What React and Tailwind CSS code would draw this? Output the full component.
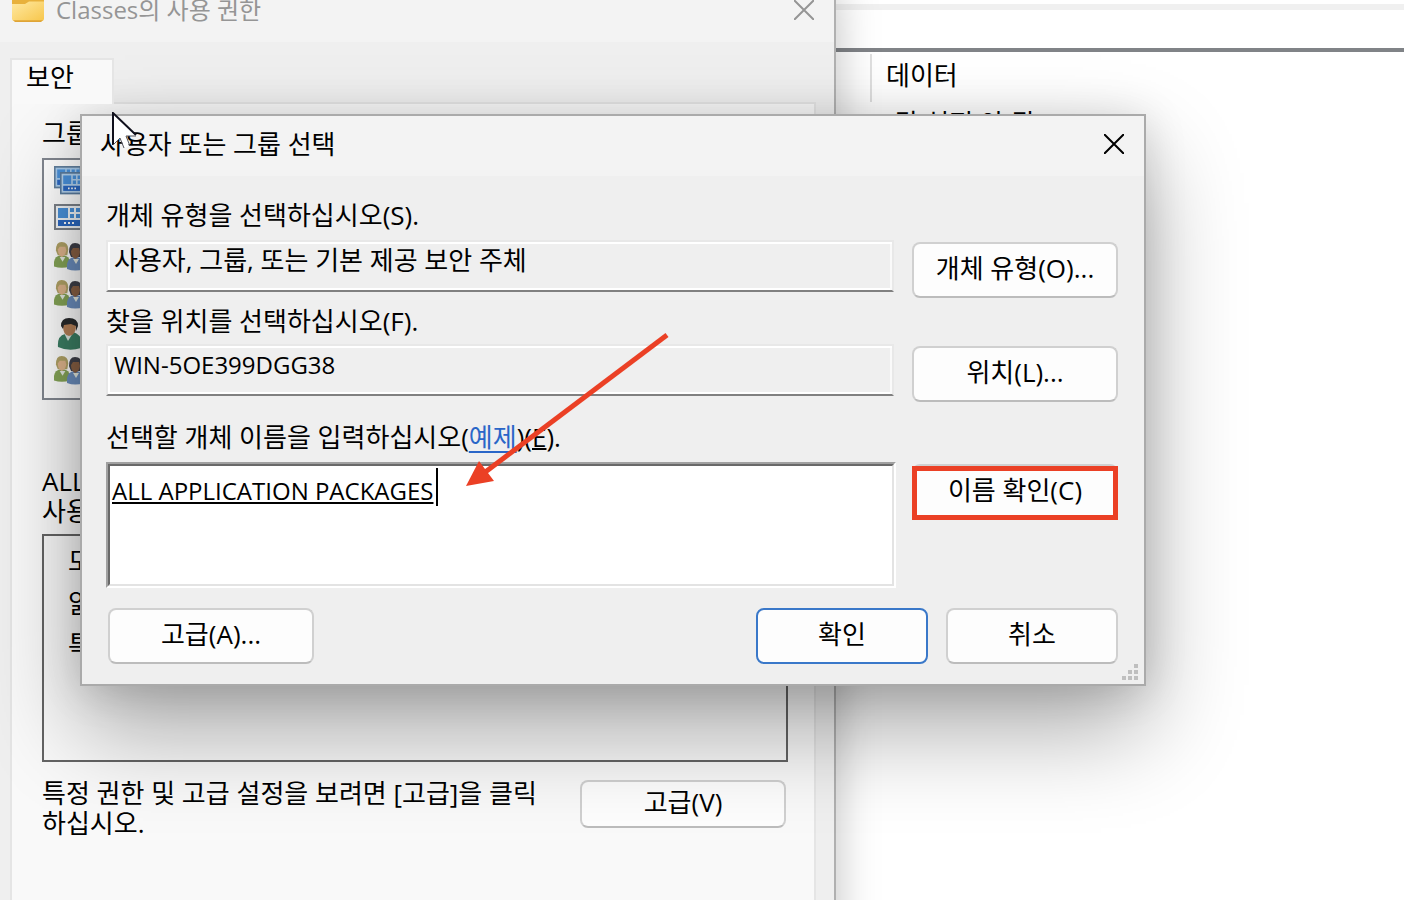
import { useState } from "react";

const principals = ["computers", "computer", "group", "group", "user", "group"];

const permissions = ["모", "읽", "특"];

function FolderIcon() {
  return (
    <svg width="32" height="24" viewBox="0 0 32 28" preserveAspectRatio="none" aria-hidden="true">
      <defs>
        <linearGradient id="folder" x1="0" y1="0" x2="1" y2="1">
          <stop offset="0" stopColor="#ffe9a2" />
          <stop offset="1" stopColor="#f7c64b" />
        </linearGradient>
      </defs>
      <path d="M0 3a3 3 0 0 1 3-3h26a3 3 0 0 1 3 3v21H0z" fill="#e8b13c" />
      <path d="M0 7h13l4-3h15v20a3 3 0 0 1-3 3H3a3 3 0 0 1-3-3z" fill="url(#folder)" />
      <path d="M1 26h30l-2 2H3z" fill="#dfa436" />
    </svg>
  );
}

function CloseIcon() {
  return (
    <svg width="20" height="20" viewBox="0 0 20 20" aria-hidden="true">
      <path d="M0 0L20 20M20 0L0 20" stroke="currentColor" strokeWidth="2" />
    </svg>
  );
}

function Screen({ frame, back }) {
  return (
    <>
      <rect width="34" height="26" fill={frame} />
      <rect x="2" y="2" width="30" height="22" fill={back} />
      <rect x="4" y="4" width="10" height="10" fill="#4a92dc" />
      <path d="M16 4h4v4h-4zM22 4h4v4h-4zM28 4h4v4h-4zM16 10h4v4h-4zM22 10h4v4h-4zM28 10h4v4h-4z" fill="#4a92dc" />
      <rect x="4" y="16" width="26" height="6" fill="#2c6ac4" />
      <path d="M10 18h2v2h-2zM14 18h2v2h-2zM18 18h2v2h-2z" fill="#fff" />
    </>
  );
}

function Person({ hair, skin, shirt }) {
  return (
    <>
      <path d="M0 26v-5q1-6 7-7h3q6 1 7 7v5q-9 3-17 0z" fill={shirt} />
      <path d="M2 9Q2 0 8 0q7 0 7 8l-1 6H4z" fill={hair} />
      <path d="M4 8l2-3h6l1 4q-1 6-5 7q-4-2-4-8z" fill={skin} />
      <path d="M6 16l3 5 3-5z" fill="#e6ebe2" />
    </>
  );
}

function PrincipalIcon({ kind }) {
  return (
    <svg width="40" height="32" viewBox="0 0 40 32" aria-hidden="true">
      {kind === "computers" && (
        <>
          <g transform="scale(0.8 0.86)">
            <Screen frame="#62819f" back="#a9cdee" />
          </g>
          <g transform="translate(6 6) scale(0.8 0.86)">
            <Screen frame="#5b7da0" back="#b5d3ee" />
          </g>
        </>
      )}
      {kind === "computer" && <Screen frame="#7d838b" back="#f4f7fa" />}
      {kind === "group" && (
        <>
          <g transform="scale(0.95 0.94)">
            <Person hair="#b3a467" skin="#e0b68d" shirt="#86a557" />
          </g>
          <g transform="translate(13 1)">
            <Person hair="#40414a" skin="#8b6245" shirt="#6c8fbf" />
          </g>
        </>
      )}
      {kind === "user" && (
        <g>
          <path d="M4 29q-1-11 7-13l4-2h4q8 2 8 10v6q-12 4-23-1z" fill="#3d8065" />
          <path d="M10 15l4 8 5-8z" fill="#dfe9e2" />
          <path d="M9 8q0 9 6 10q7-1 7-10l-2-3h-9z" fill="#b78259" />
          <path d="M7 8Q7 0 15 0q9 0 9 8l-2 5v-5l-5-2-7 1-1 4z" fill="#292b2d" />
        </g>
      )}
    </svg>
  );
}

function Button({ primary, className = "", children, ...props }) {
  return (
    <button
      type="button"
      className={`rounded-lg border-2 bg-[#fdfdfd] pb-1 text-center ${
        primary ? "border-[#3a78c9]" : "border-[#d0d0d0] border-b-[#bcbcbc]"
      } ${className}`}
      {...props}
    >
      {children}
    </button>
  );
}

function RegistryPane() {
  return (
    <div className="flex flex-col pl-[870px]">
      <div className="-ml-[870px] mt-1 h-1.5 bg-[#f0f0f0]" />
      <div className="-ml-[870px] mt-[38px] h-1 bg-[#808387]" />
      <table className="mt-0.5 w-full text-left">
        <thead>
          <tr>
            <th className="h-12 border-l-2 border-[#e0e0e0] pb-1.5 pl-3.5 font-normal">데이터</th>
          </tr>
        </thead>
        <tbody>
          <tr>
            <td className="pl-4 pt-1.5">(값 설정 안 됨)</td>
          </tr>
        </tbody>
      </table>
    </div>
  );
}

function PermissionsWindow() {
  return (
    <section className="absolute -left-0.5 -top-5 flex h-[960px] w-[838px] flex-col border-2 border-[#b0b0b0] bg-[#efefef] shadow-[0_8px_40px_rgba(0,0,0,0.25)]">
      <header className="flex h-[60px] shrink-0 items-center bg-[#f3f3f3] pb-1 pl-3 pr-5 text-[24px] text-[#959595]">
        <FolderIcon />
        <h1 className="ml-3 grow">Classes의 사용 권한</h1>
        <button type="button" aria-label="닫기">
          <CloseIcon />
        </button>
      </header>

      <div className="flex grow flex-col pl-2.5 pr-[18px] pt-4">
        <div className="relative z-10 -mb-0.5 h-[46px] w-[104px] border-2 border-b-0 border-[#e5e5e5] bg-[#f9f9f9] pl-3.5 pt-0.5">
          보안
        </div>
        <div className="grow border-2 border-[#e5e5e5] bg-[#f9f9f9] pl-[30px] pr-[26px] pt-3.5">
          <p>그룹</p>
          <ul className="mt-2.5 flex h-[242px] flex-col gap-1.5 border-2 border-[#828790] bg-white pl-2.5 pt-1.5">
            {principals.map((kind, i) => (
              <li key={i} className="h-8">
                <PrincipalIcon kind={kind} />
              </li>
            ))}
          </ul>

          <p className="mt-[66px]">
            ALL
            <br />
            사용
          </p>
          <ul className="mt-2 flex h-[228px] flex-col gap-3 border-2 border-[#646464] pl-6 pt-2.5">
            {permissions.map((name) => (
              <li key={name}>{name}</li>
            ))}
          </ul>

          <div className="mt-4 flex items-start justify-between pr-0.5">
            <p>
              특정 권한 및 고급 설정을 보려면 [고급]을 클릭
              <br />
              하십시오.
            </p>
            <Button className="mt-0.5 h-12 w-[206px]">고급(V)</Button>
          </div>
        </div>
      </div>
    </section>
  );
}

function SelectDialog() {
  const [names, setNames] = useState("ALL APPLICATION PACKAGES");

  return (
    <section
      role="dialog"
      aria-labelledby="select-title"
      className="absolute left-20 top-[114px] w-[1066px] border-2 border-[#aaaaaa] bg-[#efefef] shadow-[0_44px_90px_rgba(0,0,0,0.33),0_4px_40px_rgba(0,0,0,0.14)]"
    >
      <header className="flex h-[60px] items-center justify-between bg-[#f3f3f3] pb-1 pl-[18px] pr-5">
        <h2 id="select-title">사용자 또는 그룹 선택</h2>
        <button type="button" aria-label="닫기">
          <CloseIcon />
        </button>
      </header>

      <div className="pb-5 pl-6 pr-[26px] pt-6">
        <div className="grid grid-cols-[1fr_206px] gap-x-4">
          <label htmlFor="types" className="col-span-2 mb-2.5">개체 유형을 선택하십시오(S).</label>
          <input
            id="types"
            readOnly
            value="사용자, 그룹, 또는 기본 제공 보안 주체"
            className="mr-0.5 h-[52px] border-2 border-[#e8e8e8] border-b-[#808080] bg-[#efefef] pb-3.5 pl-1.5 shadow-[inset_0_2px_#fff,inset_2px_0_#fff,inset_-2px_0_#fafafa,inset_0_-2px_#fff] outline-none"
          />
          <Button className="mt-0.5 h-14">개체 유형(O)...</Button>

          <label htmlFor="place" className="col-span-2 mb-2 mt-2">찾을 위치를 선택하십시오(F).</label>
          <input
            id="place"
            readOnly
            value="WIN-5OE399DGG38"
            className="mr-0.5 h-[52px] border-2 border-[#e8e8e8] border-b-[#808080] bg-[#efefef] pb-3 pl-1.5 text-[24px] shadow-[inset_0_2px_#fff,inset_2px_0_#fff,inset_-2px_0_#fafafa,inset_0_-2px_#fff] outline-none"
          />
          <Button className="mt-0.5 h-14">위치(L)...</Button>

          <div className="col-span-2 mb-2.5 mt-5">
            <label htmlFor="names">선택할 개체 이름을 입력하십시오(</label>
            <a href="#example" className="text-[#2a66c8] underline decoration-2 underline-offset-4">예제</a>
            <label htmlFor="names">
              )(<span className="underline decoration-2">E</span>).
            </label>
          </div>
          <div className="relative h-[126px] border-2 border-b-white border-l-[#a0a0a0] border-r-white border-t-[#a0a0a0]">
            <textarea
              id="names"
              value={names}
              onChange={(e) => setNames(e.target.value)}
              spellCheck={false}
              className="block h-full w-full resize-none border-2 border-b-[#e3e3e3] border-l-[#696969] border-r-[#e3e3e3] border-t-[#696969] bg-white pl-0.5 pt-2.5 text-[24px] underline decoration-2 underline-offset-2 outline-none"
            />
            <span className="absolute left-[328px] top-1 h-[38px] w-0.5 bg-black" />
          </div>
          <Button className="relative mt-0.5 h-14">
            이름 확인(C)
            <span className="absolute -inset-x-0.5 -bottom-0.5 top-0 border-5 border-[#eb4025]" />
          </Button>
        </div>

        <footer className="mt-5 flex gap-[18px] pl-0.5">
          <Button className="mr-auto h-14 w-[206px]">고급(A)...</Button>
          <Button primary className="h-14 w-[172px]">확인</Button>
          <Button className="h-14 w-[172px]">취소</Button>
        </footer>
      </div>

      <svg className="absolute bottom-1 right-1.5" width="16" height="16" viewBox="0 0 16 16" fill="#bfbfbf" aria-hidden="true">
        <path d="M12 0h4v4h-4zM6 6h4v4H6zM12 6h4v4h-4zM0 12h4v4H0zM6 12h4v4H6zM12 12h4v4h-4z" />
      </svg>
    </section>
  );
}

function Arrow() {
  return (
    <svg className="pointer-events-none absolute left-[466px] top-[332px]" width="204" height="156" viewBox="0 0 204 156" aria-hidden="true">
      <path d="M201 3L18 141" stroke="#eb4025" strokeWidth="5" />
      <path d="M0 154L13 129L28 149z" fill="#eb4025" />
    </svg>
  );
}

function Pointer() {
  return (
    <svg className="pointer-events-none absolute left-28 top-28" width="26" height="40" viewBox="0 0 26 40" aria-hidden="true">
      <path d="M1 1V33L8 26L13 36L17 34L14 24H24z" fill="#fff" />
      <path d="M1 33V1L24 23" fill="none" stroke="#10101c" strokeWidth="2" />
      <path d="M24 24H14L18 34M1 33L8 26L12 36" fill="none" stroke="#55555c" />
    </svg>
  );
}

export default function App() {
  return (
    <main className="relative h-screen overflow-hidden bg-white font-['Open_Sans','Noto_Sans_CJK_KR',sans-serif] text-[26px] leading-[30px] text-black">
      <RegistryPane />
      <PermissionsWindow />
      <SelectDialog />
      <Arrow />
      <Pointer />
    </main>
  );
}
